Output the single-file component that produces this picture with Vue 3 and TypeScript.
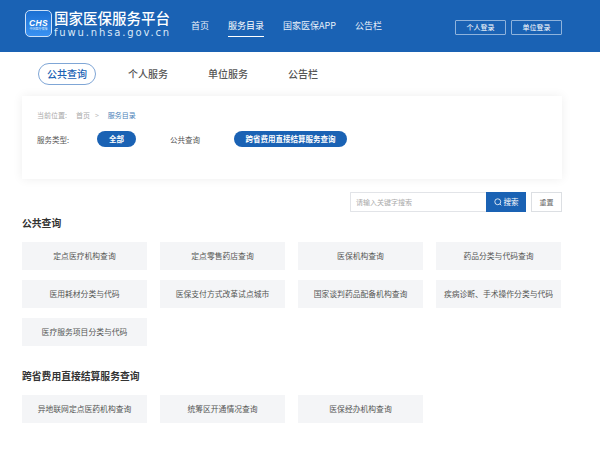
<script setup lang="ts">
const nav = ['首页', '服务目录', '国家医保APP', '公告栏']
const tabs = ['公共查询', '个人服务', '单位服务', '公告栏']
const groups = [
  {
    title: '公共查询',
    items: ['定点医疗机构查询', '定点零售药店查询', '医保机构查询', '药品分类与代码查询', '医用耗材分类与代码', '医保支付方式改革试点城市', '国家谈判药品配备机构查询', '疾病诊断、手术操作分类与代码', '医疗服务项目分类与代码'],
  },
  { title: '跨省费用直接结算服务查询', items: ['异地联网定点医药机构查询', '统筹区开通情况查询', '医保经办机构查询'] },
]
</script>

<template>
  <div class="page">
    <header class="header">
      <div class="logo">
        <div class="badge">
          <span class="chs">CHS</span>
          <span class="tiny">中国医疗保障</span>
        </div>
        <div class="brand">
          <div class="brand-name">国家医保服务平台</div>
          <div class="brand-url">fuwu.nhsa.gov.cn</div>
        </div>
      </div>
      <nav class="nav">
        <a v-for="(n, i) in nav" :key="n" class="nav-item" :class="{ active: i === 1 }">{{ n }}</a>
      </nav>
      <div class="logins">
        <button class="login">个人登录</button>
        <button class="login">单位登录</button>
      </div>
    </header>

    <div class="tabs">
      <a v-for="(t, i) in tabs" :key="t" class="tab" :class="{ active: i === 0 }">{{ t }}</a>
    </div>

    <section class="card">
      <div class="crumbs">
        <span>当前位置:</span>
        <span class="c-home">首页</span>
        <span class="c-sep">&gt;</span>
        <span class="c-cur">服务目录</span>
      </div>
      <div class="types">
        <span class="t-label">服务类型:</span>
        <span class="pill all">全部</span>
        <span class="t-plain">公共查询</span>
        <span class="pill cross">跨省费用直接结算服务查询</span>
      </div>
    </section>

    <div class="search">
      <div class="input">请输入关键字搜索</div>
      <button class="s-btn">
        <svg width="8" height="8" viewBox="0 0 10 10" fill="none" stroke="#fff" stroke-width="1">
          <circle cx="4.7" cy="4.7" r="3.7" />
          <path d="M7.4 7.4 9.2 9.2" />
        </svg>
        搜索
      </button>
      <button class="reset">重置</button>
    </div>

    <section v-for="g in groups" :key="g.title" class="group">
      <h2 class="g-title">{{ g.title }}</h2>
      <div class="grid">
        <div v-for="it in g.items" :key="it" class="cell">{{ it }}</div>
      </div>
    </section>
  </div>
</template>

<style>
html, body { margin: 0; background: #fff; }
</style>

<style scoped>
.page {
  width: 600px;
  height: 455px;
  overflow: hidden;
  background: #fff;
  font-family: "Noto Sans CJK SC", "Liberation Sans", sans-serif;
  color: #555;
}
.header {
  height: 52px;
  background: #1a62b4;
  display: flex;
  align-items: center;
  padding-left: 25px;
  color: #fff;
  box-sizing: border-box;
}
.logo { display: flex; align-items: center; gap: 2px; width: 166px; margin-top: -5px; }
.badge {
  width: 27px;
  height: 27px;
  box-sizing: border-box;
  border: 1px solid #cfe2f8;
  border-radius: 5px;
  background: linear-gradient(180deg, #1b6fd2, #3a92f2);
  display: flex;
  flex-direction: column;
  align-items: center;
  justify-content: center;
  overflow: hidden;
  padding-top: 3px;
}
.chs {
  font: italic 700 8.5px/7px "Liberation Sans", sans-serif;
  letter-spacing: 0.3px;
  color: #fff;
}
.tiny { font-size: 3px; line-height: 4px; white-space: nowrap; color: #dcebff; }
.brand-name {
  font-size: 14.5px;
  line-height: 16px;
  font-weight: 500;
  white-space: nowrap;
  margin-bottom: 1px;
}
.brand-url {
  font: 10px/11px "DejaVu Sans", sans-serif;
  letter-spacing: 1.85px;
  color: #dce9f8;
  white-space: nowrap;
}
.nav { display: flex; gap: 19px; height: 100%; align-items: stretch; }
.nav-item {
  font-size: 9px;
  line-height: 13px;
  padding-top: 19px;
  height: 37px;
  box-sizing: border-box;
  color: #e8f0fa;
  white-space: nowrap;
}
.nav-item.active { border-bottom: 1px solid #fff; color: #fff; box-sizing: content-box; height: 17px; }
.logins { margin-left: auto; margin-right: 38px; display: flex; gap: 5px; margin-top: 3px; }
.login {
  width: 51px;
  height: 15px;
  padding: 0;
  background: transparent;
  border: 1px solid #8fb3dc;
  border-radius: 1px;
  color: #fff;
  font: 7px/13px "Noto Sans CJK SC", sans-serif;
}
.tabs {
  display: flex;
  align-items: center;
  height: 44px;
  padding-left: 38px;
  box-sizing: border-box;
  gap: 40px;
}
.tab {
  font-size: 10px;
  font-weight: 500;
  line-height: 14px;
  color: #555;
}
.tab.active {
  height: 22px;
  box-sizing: border-box;
  width: 58px;
  margin-right: -8px;
  text-align: center;
  line-height: 20px;
  border: 1px solid #7fa6d6;
  border-radius: 11px;
  color: #1a62b4;
}
.card {
  margin: 0 38px 0 22px;
  height: 83px;
  box-sizing: border-box;
  padding: 14px 15px 0;
  background: #fff;
  box-shadow: 0 0 10px rgba(0, 0, 0, 0.07);
}
.crumbs { display: flex; align-items: center; height: 10px; font-size: 7px; line-height: 10px; color: #aaa; }
.c-home { margin-left: 9px; }
.c-sep { margin-left: 5px; color: #bbb; }
.c-cur { margin-left: 9px; color: #4a7fb8; }
.types { display: flex; align-items: center; margin-top: 11px; height: 16px; font-size: 7.5px; color: #555; }
.t-label { width: 60px; }
.pill {
  height: 16px;
  border-radius: 8px;
  background: #1a62b4;
  color: #fff;
  font-weight: 700;
  line-height: 16px;
  text-align: center;
}
.all { width: 39px; }
.t-plain { margin-left: 34px; width: 64px; }
.cross { width: 113px; }
.search { display: flex; justify-content: flex-end; margin: 13px 38px 0 0; height: 20px; }
.input {
  width: 136px;
  height: 20px;
  box-sizing: border-box;
  border: 1px solid #e2e4e8;
  border-right: 0;
  border-radius: 1px 0 0 1px;
  padding-left: 5px;
  font-size: 7px;
  line-height: 18px;
  color: #aaa;
}
.s-btn {
  width: 40px;
  height: 20px;
  padding: 0;
  border: 0;
  background: #1a62b4;
  color: #fff;
  font: 7.5px/20px "Noto Sans CJK SC", sans-serif;
  display: flex;
  align-items: center;
  justify-content: center;
  gap: 2px;
}
.reset {
  width: 31px;
  height: 20px;
  margin-left: 5px;
  padding: 0;
  background: #fff;
  border: 1px solid #dcdfe3;
  color: #666;
  font: 7px/18px "Noto Sans CJK SC", sans-serif;
}
.group { padding: 0 40px 0 22px; }
.g-title {
  margin: 4px 0 12px;
  font-size: 9.8px;
  line-height: 14px;
  font-weight: 700;
  color: #333;
}
.group + .group .g-title { margin-top: 23px; }
.grid { display: grid; grid-template-columns: repeat(4, 125px); gap: 10px 13px; }
.cell {
  height: 28px;
  background: #f4f5f7;
  font-size: 7.8px;
  line-height: 28px;
  text-align: center;
  color: #555;
  white-space: nowrap;
}
</style>
